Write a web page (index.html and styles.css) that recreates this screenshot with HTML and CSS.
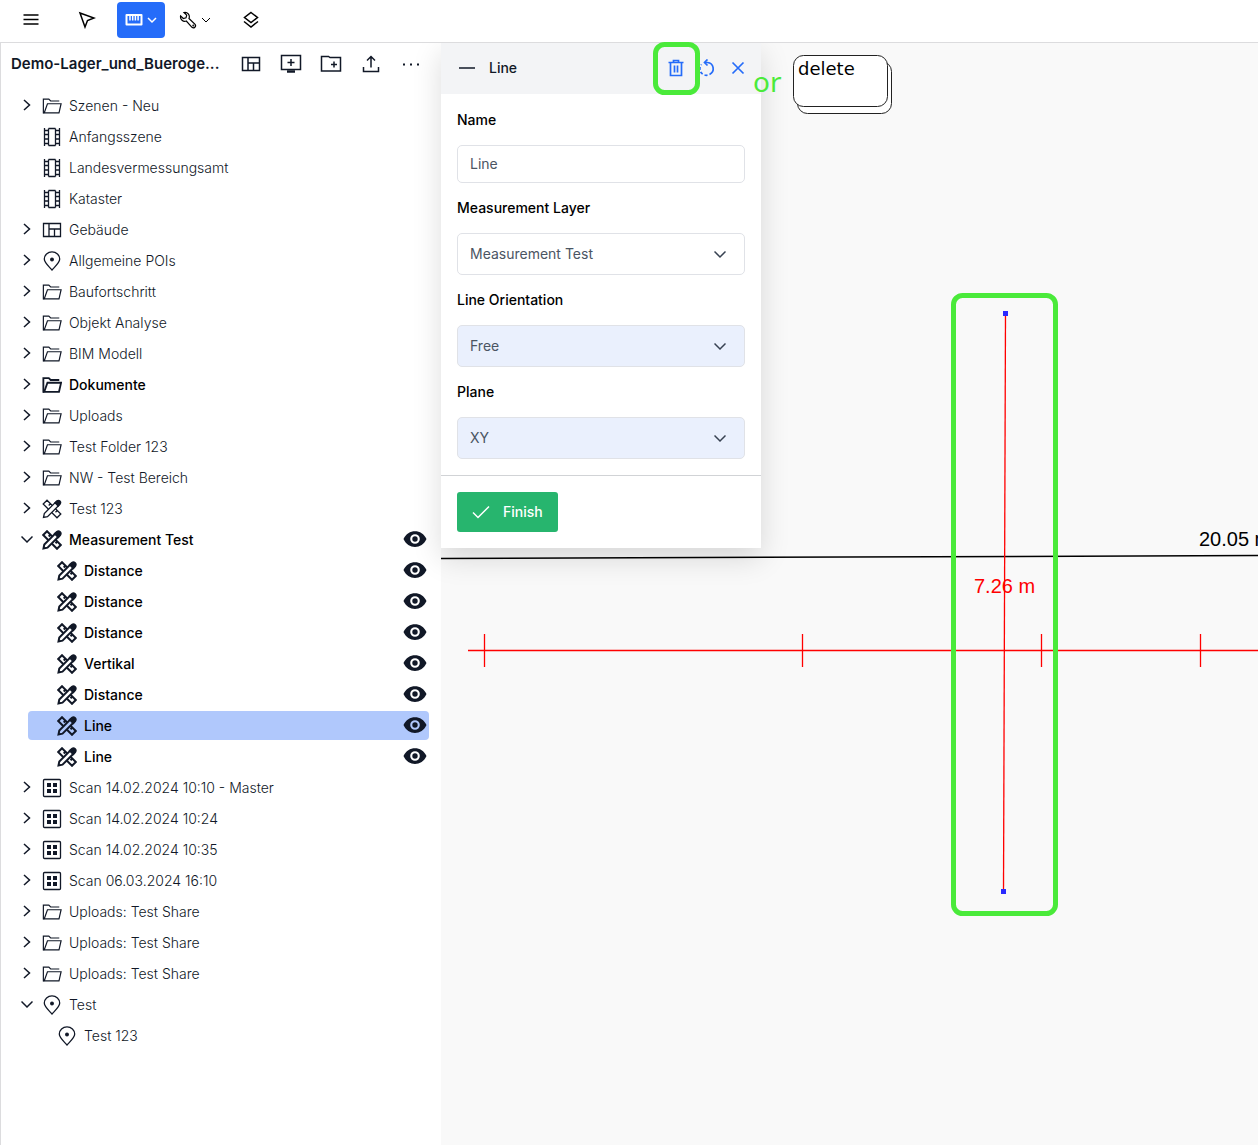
FILE: index.html
```html
<!DOCTYPE html>
<html lang="en">
<head>
<meta charset="utf-8">
<meta name="viewport" content="width=device-width, initial-scale=1">
<title>Demo-Lager_und_Buerogebäude</title>
<link rel="stylesheet" href="styles.css">
</head>
<body>
<svg class="sprite" aria-hidden="true">
  <symbol id="i-right" viewBox="0 0 12 12"><path d="M3 1l5.500 5L3 11"/></symbol>
  <symbol id="i-down" viewBox="0 0 12 12"><path d="M.5 3.500L6 9l5.500-5.500"/></symbol>
  <symbol id="i-folder" viewBox="0 0 22 20"><path d="M2.500 17.500h-1v-15h6l2 2h9.500"/><path d="M2.500 17.500L6 7.500h15l-2.300 10z"/></symbol>
  <symbol id="i-film" viewBox="0 0 20 20"><path d="M2.500 1v18M6.500 1.500v17M13.500 1.500v17M17.500 1v18M6.500 1.500h7M6.500 18.500h7M2.500 3.500h4M2.500 7.500h4M2.500 12h4M2.500 16.500h4M13.500 3.500h4M13.500 7.500h4M13.500 12h4M13.500 16.500h4"/></symbol>
  <symbol id="i-plan" viewBox="0 0 20 20"><path d="M1.500 3.500h17v13h-17zM7 3.500v13M7 9h11.500M12.500 9v7.500"/></symbol>
  <symbol id="i-pin" viewBox="0 0 20 20"><path d="M10 19C6 14.500 2.300 11.500 2.300 8a7.700 7.200 0 0 1 15.400 0c0 3.500-3.700 6.500-7.700 11z"/><circle class="solid" cx="10" cy="8.500" r="1.300"/></symbol>
  <symbol id="i-measure" viewBox="0 0 20 20"><path d="M5 1.200L1.200 5l13.800 13.800L18.800 15zM8.500 4.700L6.700 6.500M15.300 11.500l-1.800 1.800"/><path class="cover" d="M1.500 18.500l.8-4L13.500 3.300l3.200 3.200L5.500 17.700z"/><path class="solid" d="M13 3.800l2-2a2.300 2.300 0 0 1 3.200 3.200l-2 2z"/></symbol>
  <symbol id="i-scan" viewBox="0 0 20 20"><rect x="1.500" y="1.500" width="17" height="17" rx="1"/><path class="dots" d="M5 5h4v4H5zM11 5h4v4h-4zM5 11h4v4H5zM11 11h4v4h-4z"/></symbol>
  <symbol id="i-eye" viewBox="0 0 24 18"><path class="dots" fill-rule="evenodd" d="M.5 9C5-1.500 19-1.500 23.500 9 19 19.500 5 19.500.5 9zM12 4.200a4.800 4.800 0 1 0 0 9.600 4.800 4.800 0 0 0 0-9.600zM12 6.300a2.700 2.700 0 1 1 0 5.400 2.700 2.700 0 0 1 0-5.400z"/></symbol>
</svg>

<header class="toolbar">
  <div class="group">
    <button class="tool" aria-label="Menu"><svg class="icon" width="18" height="18"><path d="M1.500 4h15M1.500 8.500h15M1.500 13h15"/></svg></button>
  </div>
  <div class="group">
    <button class="tool" aria-label="Select"><svg class="icon" width="18" height="18"><path d="M2 2l14 5-6.500 2.500L7 16z"/></svg></button>
    <button class="tool active" aria-label="Measure"><svg class="icon" width="18" height="18"><path class="box" d="M1.500 4h15v9.500h-15z"/><path d="M5 4v5.500M7.700 4v5.500M10.400 4v5.500M13.100 4v5.500"/></svg><svg class="icon" width="10" height="12"><path d="M1 4l4 4 4-4"/></svg></button>
    <button class="tool" aria-label="Tools"><svg class="icon wrench" width="18" height="18"><path d="M5 1.500l2.700 2.700-.7 2.600-2.700.7L1.600 4.900C.9 8.500 4.200 11.200 7.300 10l5.700 6.300c1.900 1.700 4.600-.9 3.100-3L10 7.500C11.300 4 8.500.8 5 1.500z"/><circle cx="14.300" cy="14.500" r=".4"/></svg><svg class="icon thin" width="10" height="12"><path d="M1 4l4 4 4-4"/></svg></button>
  </div>
  <div class="group">
    <button class="tool" aria-label="Layers"><svg class="icon" width="18" height="18"><path d="M9 1.500l6.500 5L9 11.500l-6.500-5zM2 10.500l7 5.500 7-5.500"/></svg></button>
  </div>
</header>

<div class="workspace">
  <aside class="sidebar">
    <div class="project">
      <h1>Demo-Lager_und_Bueroge...</h1>
      <button aria-label="Plan"><svg class="icon" width="20" height="20"><use href="#i-plan"/></svg></button>
      <button aria-label="Add scene"><svg class="icon" width="22" height="20"><path d="M1.500 1.500h19v14h-19zM11 5v7M7.500 8.500h7"/><path class="thick" d="M7 17.500h8"/></svg></button>
      <button aria-label="Add folder"><svg class="icon" width="22" height="20"><path d="M1.500 17v-14.500h7l1.500 1h10.500v13.500zM14 7.500v6M11 10.500h6"/></svg></button>
      <button aria-label="Upload"><svg class="icon" width="18" height="20"><path d="M1.500 13v4.500h15V13M9 13.500V2.500M5 6.500l4-4 4 4"/></svg></button>
      <button aria-label="More"><svg class="icon" width="20" height="20"><path class="dots" d="M2 9.500h2v2H2zM9 9.500h2v2H9zM16 9.500h2v2h-2z"/></svg></button>
    </div>
    <ul class="tree">
      <li><div class="row"><button class="twist" aria-label="Expand"><svg class="icon" width="12" height="12"><use href="#i-right"/></svg></button><svg class="icon kind" width="22" height="20"><use href="#i-folder"/></svg><span>Szenen - Neu</span></div></li>
      <li><div class="row"><i class="twist"></i><svg class="icon kind" width="20" height="20"><use href="#i-film"/></svg><span>Anfangsszene</span></div></li>
      <li><div class="row"><i class="twist"></i><svg class="icon kind" width="20" height="20"><use href="#i-film"/></svg><span>Landesvermessungsamt</span></div></li>
      <li><div class="row"><i class="twist"></i><svg class="icon kind" width="20" height="20"><use href="#i-film"/></svg><span>Kataster</span></div></li>
      <li><div class="row"><button class="twist" aria-label="Expand"><svg class="icon" width="12" height="12"><use href="#i-right"/></svg></button><svg class="icon kind" width="20" height="20"><use href="#i-plan"/></svg><span>Gebäude</span></div></li>
      <li><div class="row"><button class="twist" aria-label="Expand"><svg class="icon" width="12" height="12"><use href="#i-right"/></svg></button><svg class="icon kind" width="20" height="20"><use href="#i-pin"/></svg><span>Allgemeine POIs</span></div></li>
      <li><div class="row"><button class="twist" aria-label="Expand"><svg class="icon" width="12" height="12"><use href="#i-right"/></svg></button><svg class="icon kind" width="22" height="20"><use href="#i-folder"/></svg><span>Baufortschritt</span></div></li>
      <li><div class="row"><button class="twist" aria-label="Expand"><svg class="icon" width="12" height="12"><use href="#i-right"/></svg></button><svg class="icon kind" width="22" height="20"><use href="#i-folder"/></svg><span>Objekt Analyse</span></div></li>
      <li><div class="row"><button class="twist" aria-label="Expand"><svg class="icon" width="12" height="12"><use href="#i-right"/></svg></button><svg class="icon kind" width="22" height="20"><use href="#i-folder"/></svg><span>BIM Modell</span></div></li>
      <li><div class="row strong"><button class="twist" aria-label="Expand"><svg class="icon" width="12" height="12"><use href="#i-right"/></svg></button><svg class="icon kind" width="22" height="20"><use href="#i-folder"/></svg><span>Dokumente</span></div></li>
      <li><div class="row"><button class="twist" aria-label="Expand"><svg class="icon" width="12" height="12"><use href="#i-right"/></svg></button><svg class="icon kind" width="22" height="20"><use href="#i-folder"/></svg><span>Uploads</span></div></li>
      <li><div class="row"><button class="twist" aria-label="Expand"><svg class="icon" width="12" height="12"><use href="#i-right"/></svg></button><svg class="icon kind" width="22" height="20"><use href="#i-folder"/></svg><span>Test Folder 123</span></div></li>
      <li><div class="row"><button class="twist" aria-label="Expand"><svg class="icon" width="12" height="12"><use href="#i-right"/></svg></button><svg class="icon kind" width="22" height="20"><use href="#i-folder"/></svg><span>NW - Test Bereich</span></div></li>
      <li><div class="row"><button class="twist" aria-label="Expand"><svg class="icon" width="12" height="12"><use href="#i-right"/></svg></button><svg class="icon kind" width="20" height="20"><use href="#i-measure"/></svg><span>Test 123</span></div></li>
      <li>
        <div class="row strong"><button class="twist" aria-label="Collapse"><svg class="icon" width="12" height="12"><use href="#i-down"/></svg></button><svg class="icon kind" width="20" height="20"><use href="#i-measure"/></svg><span>Measurement Test</span><button class="eye" aria-label="Toggle visibility"><svg class="icon" width="24" height="18"><use href="#i-eye"/></svg></button></div>
        <ul>
          <li><div class="row strong"><i class="twist"></i><svg class="icon kind" width="20" height="20"><use href="#i-measure"/></svg><span>Distance</span><button class="eye" aria-label="Toggle visibility"><svg class="icon" width="24" height="18"><use href="#i-eye"/></svg></button></div></li>
          <li><div class="row strong"><i class="twist"></i><svg class="icon kind" width="20" height="20"><use href="#i-measure"/></svg><span>Distance</span><button class="eye" aria-label="Toggle visibility"><svg class="icon" width="24" height="18"><use href="#i-eye"/></svg></button></div></li>
          <li><div class="row strong"><i class="twist"></i><svg class="icon kind" width="20" height="20"><use href="#i-measure"/></svg><span>Distance</span><button class="eye" aria-label="Toggle visibility"><svg class="icon" width="24" height="18"><use href="#i-eye"/></svg></button></div></li>
          <li><div class="row strong"><i class="twist"></i><svg class="icon kind" width="20" height="20"><use href="#i-measure"/></svg><span>Vertikal</span><button class="eye" aria-label="Toggle visibility"><svg class="icon" width="24" height="18"><use href="#i-eye"/></svg></button></div></li>
          <li><div class="row strong"><i class="twist"></i><svg class="icon kind" width="20" height="20"><use href="#i-measure"/></svg><span>Distance</span><button class="eye" aria-label="Toggle visibility"><svg class="icon" width="24" height="18"><use href="#i-eye"/></svg></button></div></li>
          <li><div class="row strong selected"><i class="twist"></i><svg class="icon kind" width="20" height="20"><use href="#i-measure"/></svg><span>Line</span><button class="eye" aria-label="Toggle visibility"><svg class="icon" width="24" height="18"><use href="#i-eye"/></svg></button></div></li>
          <li><div class="row strong"><i class="twist"></i><svg class="icon kind" width="20" height="20"><use href="#i-measure"/></svg><span>Line</span><button class="eye" aria-label="Toggle visibility"><svg class="icon" width="24" height="18"><use href="#i-eye"/></svg></button></div></li>
        </ul>
      </li>
      <li><div class="row"><button class="twist" aria-label="Expand"><svg class="icon" width="12" height="12"><use href="#i-right"/></svg></button><svg class="icon kind" width="20" height="20"><use href="#i-scan"/></svg><span>Scan 14.02.2024 10:10 - Master</span></div></li>
      <li><div class="row"><button class="twist" aria-label="Expand"><svg class="icon" width="12" height="12"><use href="#i-right"/></svg></button><svg class="icon kind" width="20" height="20"><use href="#i-scan"/></svg><span>Scan 14.02.2024 10:24</span></div></li>
      <li><div class="row"><button class="twist" aria-label="Expand"><svg class="icon" width="12" height="12"><use href="#i-right"/></svg></button><svg class="icon kind" width="20" height="20"><use href="#i-scan"/></svg><span>Scan 14.02.2024 10:35</span></div></li>
      <li><div class="row"><button class="twist" aria-label="Expand"><svg class="icon" width="12" height="12"><use href="#i-right"/></svg></button><svg class="icon kind" width="20" height="20"><use href="#i-scan"/></svg><span>Scan 06.03.2024 16:10</span></div></li>
      <li><div class="row"><button class="twist" aria-label="Expand"><svg class="icon" width="12" height="12"><use href="#i-right"/></svg></button><svg class="icon kind" width="22" height="20"><use href="#i-folder"/></svg><span>Uploads: Test Share</span></div></li>
      <li><div class="row"><button class="twist" aria-label="Expand"><svg class="icon" width="12" height="12"><use href="#i-right"/></svg></button><svg class="icon kind" width="22" height="20"><use href="#i-folder"/></svg><span>Uploads: Test Share</span></div></li>
      <li><div class="row"><button class="twist" aria-label="Expand"><svg class="icon" width="12" height="12"><use href="#i-right"/></svg></button><svg class="icon kind" width="22" height="20"><use href="#i-folder"/></svg><span>Uploads: Test Share</span></div></li>
      <li>
        <div class="row"><button class="twist" aria-label="Collapse"><svg class="icon" width="12" height="12"><use href="#i-down"/></svg></button><svg class="icon kind" width="20" height="20"><use href="#i-pin"/></svg><span>Test</span></div>
        <ul>
          <li><div class="row"><i class="twist"></i><svg class="icon kind" width="20" height="20"><use href="#i-pin"/></svg><span>Test 123</span></div></li>
        </ul>
      </li>
    </ul>
  </aside>

  <main class="viewport">
    <svg class="scene">
      <path class="wire" d="M0 515.500L1634 509.500"/>
      <text class="dimension" x="758" y="503">20.05 m</text>
      <path class="ruler" d="M27 607.500H2400M43.500 591v33M361.500 591v33M600.500 591v33M759.500 591v33"/>
      <path class="ruler" d="M564.500 270L562.500 848"/>
      <text class="dimension red" x="533" y="550">7.26 m</text>
      <path class="handle" d="M562 268h5v5h-5zM560 846h5v5h-5z"/>
    </svg>

    <section class="panel">
      <header>
        <svg class="icon" width="16" height="16"><path d="M0 8h16"/></svg>
        <h2>Line</h2>
        <button aria-label="Delete"><svg class="icon" width="18" height="18"><path d="M3.500 4v12.500h11V4M1.500 3.500h15M6.500 3V1.500h5V3M7.500 6.500v7M10.500 6.500v7"/></svg></button>
        <button aria-label="Reset"><svg class="icon" width="18" height="18"><path d="M7 3.500h2.500a6.300 6.300 0 0 1 2 12"/><path stroke-dasharray="3 2" d="M9.500 16.200A6.500 6.500 0 0 1 3.500 5.500"/><path d="M9.500.5L6.500 3.500l3 3"/></svg></button>
        <button aria-label="Close"><svg class="icon" width="18" height="18"><path d="M3.500 3.500l11 11M14.500 3.500l-11 11"/></svg></button>
      </header>
      <form class="fields">
        <label for="name">Name</label>
        <input id="name" type="text" value="Line">
        <label for="layer">Measurement Layer</label>
        <div class="pick"><select id="layer"><option>Measurement Test</option></select><svg class="icon" width="12" height="12"><use href="#i-down"/></svg></div>
        <label for="orientation">Line Orientation</label>
        <div class="pick tinted"><select id="orientation"><option>Free</option></select><svg class="icon" width="12" height="12"><use href="#i-down"/></svg></div>
        <label for="plane">Plane</label>
        <div class="pick tinted"><select id="plane"><option>XY</option></select><svg class="icon" width="12" height="12"><use href="#i-down"/></svg></div>
      </form>
      <footer>
        <button class="finish"><svg class="icon" width="18" height="14"><path d="M1 7.500L6 12.500 17 1.500"/></svg>Finish</button>
      </footer>
    </section>

    <svg class="notes">
      <rect class="mark" x="214.500" y="1.500" width="42" height="48" rx="9"/>
      <rect class="mark" x="512.500" y="252.500" width="102" height="618" rx="9"/>
      <text class="or" x="312" y="49">or</text>
      <rect class="key" x="356.500" y="18.500" width="94" height="52" rx="10"/>
      <rect class="key" x="352.500" y="12.500" width="94" height="51" rx="10"/>
      <text class="keycap" x="357" y="32">delete</text>
    </svg>
  </main>
</div>
</body>
</html>
```

FILE: styles.css
```css
* { box-sizing: border-box; }

body {
  margin: 0;
  min-height: 100vh;
  display: flex;
  flex-direction: column;
  font: 14px/20px Inter, "Liberation Sans", sans-serif;
  color: #111827;
  background: #fff;
}

button {
  display: flex;
  align-items: center;
  justify-content: center;
  padding: 0;
  border: 0;
  background: none;
  color: inherit;
  font: inherit;
  cursor: pointer;
}

h1, h2 { margin: 0; }
ul { margin: 0; padding: 0; list-style: none; }

/* Icons */
.sprite { position: absolute; width: 0; height: 0; }
.icon { flex: none; fill: none; stroke: currentColor; stroke-width: 1.5; }
.thick { stroke-width: 2.5; }
.box { stroke-width: 2; stroke-linejoin: round; }
.thin { stroke-width: 1; }
.wrench { stroke-width: 1.2; }
.solid { fill: currentColor; }
.dots { fill: currentColor; stroke: none; }
.cover { fill: var(--row, #fff); }

/* Top toolbar */
.toolbar {
  position: relative;
  z-index: 2;
  display: flex;
  gap: 8px;
  height: 43px;
  padding: 2px 7px 4px;
  border-bottom: 1px solid #dcdcde;
  background: #fff;
}
.group { display: flex; gap: 6px; }
.tool { width: 48px; height: 36px; gap: 4px; border-radius: 4px; color: #000; }
.tool.active { background: #256cf9; color: #fff; }

.workspace { flex: 1; display: flex; }

/* Scene tree */
.sidebar {
  flex: none;
  width: 441px;
  border-left: 1px solid #dcdcde;
}
.project {
  display: flex;
  align-items: center;
  height: 42px;
  padding: 0 10px;
}
.project h1 {
  flex: 1;
  min-width: 0;
  overflow: hidden;
  white-space: nowrap;
  font-size: 15px;
  font-weight: 600;
  line-height: 24px;
}
.project button { width: 40px; height: 40px; }
.tree { padding: 6px 12px; }
.tree ul { padding-left: 15px; }
.row {
  display: flex;
  align-items: center;
  height: 29px;
  margin-bottom: 2px;
  border-radius: 4px;
}
.row span { margin-left: 7px; font-weight: 300; }
.row .kind { width: 20px; overflow: visible; stroke-width: 1.3; }
.twist { flex: none; width: 29px; height: 29px; padding: 0 1px 2px 0; }
.row.strong span { font-weight: 500; color: #000; }
.row.strong .kind { stroke-width: 2; }
.row.selected { --row: #b0c8fc; background: var(--row); }
.eye { margin-left: auto; width: 28px; height: 29px; padding-bottom: 1px; }

/* Drawing area */
.viewport {
  flex: 1;
  min-width: 0;
  position: relative;
  background: #f9f9f9;
}
.scene, .notes { position: absolute; inset: 0; width: 100%; height: 100%; }
.notes { z-index: 3; overflow: visible; pointer-events: none; }
.wire { stroke: #000; stroke-width: 1.5; }
.ruler { fill: none; stroke: #f00; stroke-width: 1.3; }
.handle { fill: #2a2aff; }
.dimension { font: 20px "Liberation Sans", Arial, sans-serif; }
.red { fill: #f00; }
.mark { fill: none; stroke: #4aea3a; stroke-width: 5; }
.or { font: 28px "Noto Sans", sans-serif; fill: #4aea3a; }
.key { fill: #fff; stroke: #222; stroke-width: 1; }
.keycap { font: 18px "DejaVu Sans", sans-serif; }

/* Measurement panel */
.panel {
  position: relative;
  width: 320px;
  background: #fff;
  box-shadow: 0 10px 28px rgba(0, 0, 0, .14);
}
.panel header {
  display: flex;
  align-items: center;
  height: 51px;
  padding: 0 8px 2px 18px;
  background: #f3f4f6;
}
.panel h2 { flex: 1; margin-left: 14px; font-size: 14px; font-weight: 500; }
.panel header button { width: 31px; height: 31px; color: #256cf9; }
.panel header button .icon { stroke-width: 1.7; }
.fields { display: flex; flex-direction: column; gap: 15px; padding: 16px; }
.fields label { font-weight: 500; color: #000; }
.fields input, .fields select {
  width: 100%;
  padding: 0 12px;
  border: 1px solid #e0e2e7;
  border-radius: 5px;
  background: #fff;
  color: #4b5563;
  font: inherit;
}
.fields input { height: 38px; padding-bottom: 2px; }
.fields select { height: 42px; appearance: none; grid-area: 1 / 1; }
.pick { display: grid; align-items: center; color: #374151; }
.pick .icon { grid-area: 1 / 1; justify-self: end; margin-right: 19px; pointer-events: none; }
.tinted select { background: #eaf0fd; }
.panel footer { padding: 16px; border-top: 1px solid #d1d3d6; }
.finish {
  height: 40px;
  padding: 0 15px;
  gap: 13px;
  border-radius: 3px;
  background: #27b56e;
  color: #fff;
  font-weight: 500;
}
```
